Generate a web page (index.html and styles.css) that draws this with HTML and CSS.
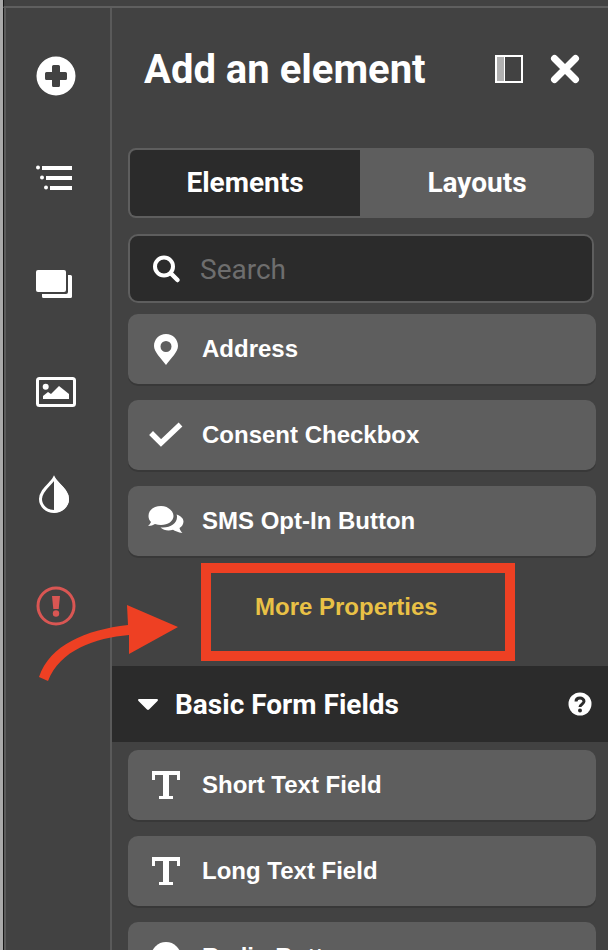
FILE: index.html
```html
<!DOCTYPE html>
<html lang="en">
<head>
<meta charset="utf-8">
<title>Add an element</title>
<link rel="stylesheet" href="styles.css">
</head>
<body>
<div class="app">
  <div class="topbar"></div>
  <div class="main">
    <nav class="rail">
      <div class="slot"><svg class="ico" width="40" height="40" viewBox="0 0 40 40"><path fill="#fff" fill-rule="evenodd" d="M20 .5a19.5 19.5 0 1 0 0 39 19.500 19.500 0 0 0 0-39zM17.500 9h5a1.500 1.500 0 0 1 1.500 1.500V16h5.500a1.500 1.500 0 0 1 1.500 1.500v5a1.500 1.500 0 0 1-1.500 1.500H24v5.500a1.500 1.500 0 0 1-1.500 1.500h-5a1.500 1.500 0 0 1-1.500-1.500V24h-5.500A1.500 1.500 0 0 1 9 22.500v-5A1.500 1.500 0 0 1 10.500 16H16v-5.500A1.500 1.500 0 0 1 17.500 9z"/></svg></div>
      <div class="slot"><svg class="ico" width="40" height="28" viewBox="0 0 40 28"><g fill="#fff"><circle cx="2" cy="3.500" r="2"/><rect x="6" y="2" width="30" height="4"/><circle cx="6" cy="13.500" r="2"/><rect x="10" y="12" width="26" height="4"/><circle cx="10" cy="23.500" r="2"/><rect x="14" y="22" width="22" height="4"/></g></svg></div>
      <div class="slot"><svg class="ico" width="40" height="30" viewBox="0 0 40 30"><g fill="#fff"><rect x="0" y="1" width="30" height="22" rx="2"/><path d="M32 6h2.500A1.500 1.500 0 0 1 36 7.500v20a1.500 1.500 0 0 1-1.500 1.500H7.500A1.500 1.500 0 0 1 6 27.500V25h24a2 2 0 0 0 2-2z"/></g></svg></div>
      <div class="slot"><svg class="ico" width="42" height="32" viewBox="0 0 42 32"><rect x="2.500" y="2.500" width="37" height="27" rx="2" fill="none" stroke="#fff" stroke-width="3"/><circle cx="10.700" cy="10.700" r="3" fill="#fff"/><path fill="#fff" d="M8 23v-3l5-4 3 2 8-8 10 8v5z"/></svg></div>
      <div class="slot"><svg class="ico drop" width="32" height="38" viewBox="0 0 32 38"><path fill="none" stroke="#fff" stroke-width="3" d="M16 3.500C13 9 2.500 15 2.500 24a13.500 12.500 0 0 0 27 0C29.500 15 19 9 16 3.500z"/><path fill="#fff" d="M16 1.500c4 7 15 13 15 22.500a15 13.500 0 0 1-15 13.500z"/></svg></div>
      <div class="slot"><svg class="ico" width="40" height="40" viewBox="0 0 40 40"><circle cx="20" cy="20" r="18" fill="none" stroke="#d95653" stroke-width="3"/><path fill="#d95653" d="M16 10h8l-1.300 13h-5.400z"/><circle cx="20" cy="27.500" r="3.200" fill="#d95653"/></svg></div>
    </nav>
    <section class="panel">
      <header class="head">
        <h1 class="title">Add an element</h1>
        <div class="tools">
          <svg width="28" height="28" viewBox="0 0 28 28"><rect x="1" y="1" width="26" height="26" fill="none" stroke="#fff" stroke-width="2"/><rect x="2" y="2" width="7" height="24" fill="#b0b0b0"/><rect x="9" y="2" width="1" height="24" fill="#fff"/></svg>
          <svg width="30" height="30" viewBox="0 0 30 30"><path stroke="#fff" stroke-width="7" stroke-linecap="round" d="M4.500 4.500l21 21M25.500 4.500l-21 21"/></svg>
        </div>
      </header>
      <div class="stack">
        <div class="tabs">
          <div class="tab active">Elements</div>
          <div class="tab other">Layouts</div>
        </div>
        <div class="search">
          <svg width="30" height="30" viewBox="0 0 30 30"><circle cx="13" cy="12.500" r="9" fill="none" stroke="#fff" stroke-width="4"/><path stroke="#fff" stroke-width="4.500" stroke-linecap="round" d="M20 19.500l6.500 6.500"/></svg>
          <span class="placeholder">Search</span>
        </div>
      </div>
      <div class="list">
        <div class="row"><span class="rico"><svg width="26" height="32" viewBox="0 0 26 32"><path fill="#fff" fill-rule="evenodd" d="M13 1C6 1 1 6.500 1 13c0 6 7 12 12 19 5-7 12-13 12-19C25 6.500 20 1 13 1zm0 7a5.500 5.500 0 1 1 0 11 5.500 5.500 0 0 1 0-11z"/></svg></span>Address</div>
        <div class="row"><span class="rico"><svg width="34" height="26" viewBox="0 0 34 26"><path fill="none" stroke="#fff" stroke-width="5.500" stroke-linecap="square" d="M4 13l8 8L29.500 4.500"/></svg></span>Consent Checkbox</div>
        <div class="row"><span class="rico"><svg width="38" height="30" viewBox="0 0 38 30"><g fill="#fff"><path d="M14 0C7 0 1.500 4 1.500 10c0 2.500 1 4.500 2.500 6-.5 1.500-2 3-3 4 3 0 5-1 7-2 2 .7 4 1 6 1 7 0 12.500-4 12.500-9S21 0 14 0z"/><path d="M29.500 8.500c.5 1 .5 1.500.5 2.500 0 6-6 10.500-14 10.500h-2.500c2 2 5 3 8 3 1.500 0 3-.2 4.500-.7 2 1.200 5 2.700 9.500 3.200-1-1-2.500-2.500-3-5 2.500-1.500 4-4 4-6.500 0-3-2.700-5.500-7-7z"/></g></svg></span>SMS Opt-In Button</div>
      </div>
      <div class="more">More Properties</div>
      <div class="section">
        <svg width="20" height="11" viewBox="0 0 20 11"><path fill="#fff" d="M1.500 0h17c1.500 0 1.800 1 1 2L11 10.500c-.5.600-1.500.600-2 0L.5 2C-.3 1 0 0 1.500 0z"/></svg>
        <span class="section-name">Basic Form Fields</span>
        <svg class="help" width="24" height="24" viewBox="0 0 24 24"><circle cx="12" cy="12" r="11.500" fill="#fff"/><path fill="none" stroke="#2b2b2b" stroke-width="3" d="M8 9.500c0-2.500 2-3.500 4-3.500s4 1.200 4 3.300c0 3-4 2.700-4 5.700"/><circle cx="12" cy="18.500" r="2" fill="#2b2b2b"/></svg>
      </div>
      <div class="list list-b">
        <div class="row"><span class="rico"><svg width="28" height="28" viewBox="0 0 28 28"><path fill="#fff" d="M0 0h28v9h-3V4H17v21h4v3H7v-3h4V4H3v5H0z"/></svg></span>Short Text Field</div>
        <div class="row"><span class="rico"><svg width="28" height="28" viewBox="0 0 28 28"><path fill="#fff" d="M0 0h28v9h-3V4H17v21h4v3H7v-3h4V4H3v5H0z"/></svg></span>Long Text Field</div>
        <div class="row"><span class="rico"><svg width="30" height="30" viewBox="0 0 30 30"><circle cx="15" cy="15" r="15" fill="#fff"/></svg></span>Radio Buttons</div>
      </div>
    </section>
  </div>
  <svg class="annotation" width="608" height="950" viewBox="0 0 608 950">
    <rect x="206" y="568" width="304" height="88" fill="none" stroke="#ee4023" stroke-width="10"/>
    <path fill="#ee4023" d="M39 677C50 645 85 630 128 625L127 605L178 627L129 654L129 635C95 638 60 650 48 681Z"/>
  </svg>
</div>
</body>
</html>
```
FILE: styles.css
```css
* { box-sizing: border-box; }
html, body { margin: 0; height: 100%; overflow: hidden; }
body { background: #424242; font-family: Roboto, "Liberation Sans", sans-serif; color: #fff; }
.app { position: relative; width: 608px; height: 950px; overflow: hidden; border-left: 3px solid #a9a9a9; }
.topbar { height: 8px; border-bottom: 2px solid #5f5f5f; border-left: 1px solid #161616; }
.main { display: flex; height: 942px; border-left: 1px solid #161616; }
.rail { width: 108px; flex: none; border-left: 2px solid #5a5a5a; border-right: 2px solid #5a5a5a; padding-right: 4px; display: grid; grid-template-rows: 88px 102px 106px 108px 102px 112px; align-content: start; justify-items: center; }
.slot { display: flex; align-items: center; justify-content: center; height: 40px; align-self: end; }
.ico { display: block; }
.drop { margin-right: 4px; }
.panel { flex: 1; min-width: 0; }
.head { height: 140px; padding: 0 28px 0 33px; display: flex; align-items: flex-start; justify-content: space-between; }
.title { margin: 38px 0 0 -1px; font-size: 40px; line-height: 48px; font-weight: 700; }
.tools { display: flex; gap: 27px; align-items: center; margin-top: 46px; }
.tools svg { display: block; }
.stack { padding: 0 14px 0 16px; display: flex; flex-direction: column; gap: 16px; }
.tabs { display: flex; height: 70px; border-radius: 8px; background: #5e5e5e; overflow: hidden; border: 2px solid #5e5e5e; }
.tab { flex: 1; display: flex; align-items: center; justify-content: center; font-size: 28px; font-weight: 700; padding-bottom: 2px; }
.tab.active { background: #2b2b2b; flex: 0 0 230px; }
.tab.other { padding-left: 2px; }
.search { height: 69px; border: 2px solid #5e5e5e; border-radius: 10px; background: #2b2b2b; display: flex; align-items: center; gap: 19px; padding-left: 21px; }
.search svg { display: block; }
.placeholder { font-size: 28px; color: #6e6e6e; padding-top: 2px; }
.list { padding: 11px 12px 0 16px; display: flex; flex-direction: column; gap: 16px; }
.list-b { padding-top: 8px; }
.row { height: 70px; flex: none; background: #5e5e5e; border-radius: 10px; box-shadow: 0 2px 0 #383838; display: flex; align-items: center; font-family: "Liberation Sans", Roboto, sans-serif; font-size: 24px; font-weight: 700; }
.rico { width: 74px; padding-left: 1px; flex: none; display: flex; justify-content: center; }
.rico svg { display: block; flex: none; }
.more { height: 110px; padding: 35px 0 0 143px; font-family: "Liberation Sans", Roboto, sans-serif; font-size: 24px; line-height: 32px; font-weight: 700; color: #e9c146; }
.section { height: 76px; background: #2b2b2b; display: flex; align-items: center; padding: 0 16px 0 26px; gap: 17px; }
.section-name { flex: 1; font-size: 28px; font-weight: 700; }
.annotation { position: absolute; left: -3px; top: 0; pointer-events: none; }
```
